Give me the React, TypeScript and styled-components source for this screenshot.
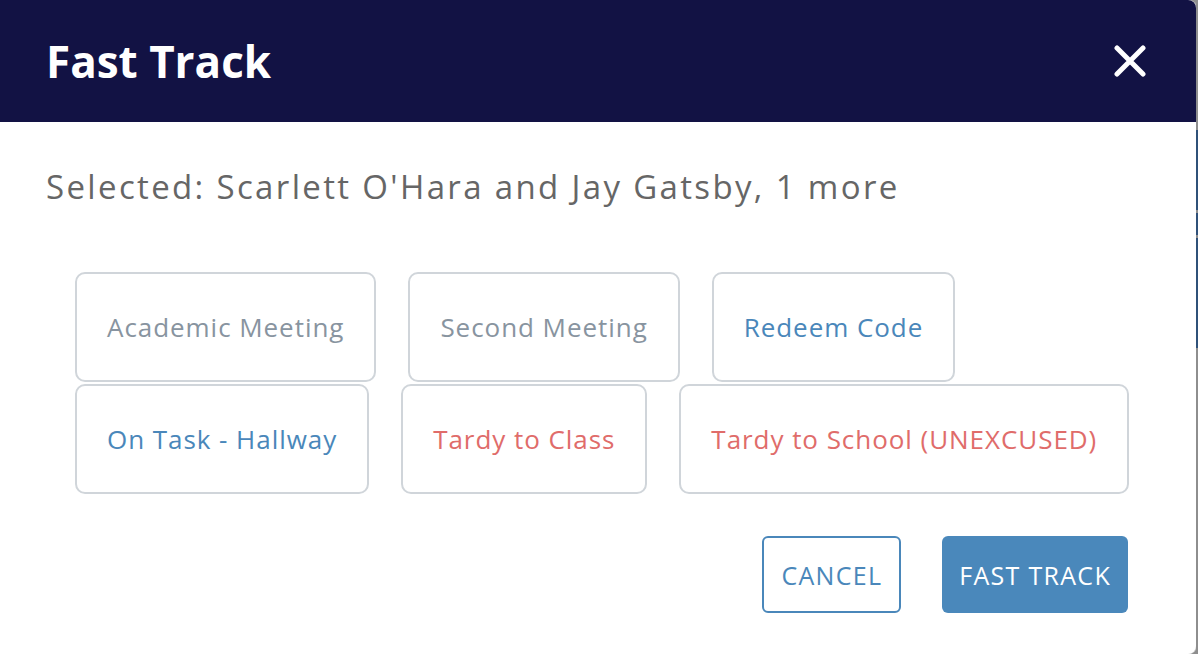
import React from "react";
import styled, { createGlobalStyle } from "styled-components";

type Tone = "muted" | "info" | "danger";

interface Item {
  label: string;
  tone: Tone;
}

const items: Item[] = [
  { label: "Academic Meeting", tone: "muted" },
  { label: "Second Meeting", tone: "muted" },
  { label: "Redeem Code", tone: "info" },
  { label: "On Task - Hallway", tone: "info" },
  { label: "Tardy to Class", tone: "danger" },
  { label: "Tardy to School (UNEXCUSED)", tone: "danger" },
];

const toneColor: Record<Tone, string> = {
  muted: "#8894a0",
  info: "#4a87ba",
  danger: "#e06c6a",
};

const App = () => {
  return (
    <Page>
      <GlobalStyle />
      <Modal>
        <Header>
          <Title>Fast Track</Title>
          <CloseButton aria-label="Close">
            <svg width="32" height="32" viewBox="0 0 32 32">
              <path
                d="M3 3 L29 29 M29 3 L3 29"
                stroke="#fff"
                strokeWidth="5"
                strokeLinecap="round"
              />
            </svg>
          </CloseButton>
        </Header>
        <Body>
          <Selected>Selected: Scarlett O'Hara and Jay Gatsby, 1 more</Selected>
          <Chips>
            {items.map((item) => (
              <Chip key={item.label} $tone={item.tone}>
                {item.label}
              </Chip>
            ))}
          </Chips>
          <Footer>
            <CancelButton>Cancel</CancelButton>
            <SubmitButton>Fast Track</SubmitButton>
          </Footer>
        </Body>
      </Modal>
      <Backdrop>
        <Segment $color="#8e8e8e" $h={130} />
        <Segment $color="#2f5179" $h={80} />
        <Segment $color="#8e8e8e" $h={3} />
        <Segment $color="#2f5179" $h={22} />
        <Segment $color="#8e8e8e" $h={3} />
        <Segment $color="#2f5179" $h={110} />
        <Segment $color="#8e8e8e" $h={306} />
      </Backdrop>
    </Page>
  );
};

export default App;

const GlobalStyle = createGlobalStyle`
  html, body {
    margin: 0;
    padding: 0;
    background: #8e8e8e;
  }
  body {
    font-family: "Open Sans", "Liberation Sans", sans-serif;
  }
`;

const Page = styled.div`
  display: flex;
  width: 1198px;
  height: 654px;
  overflow: hidden;
`;

const Modal = styled.div`
  flex: 1;
  display: flex;
  flex-direction: column;
  background: #fff;
  border-radius: 0 8px 8px 0;
  overflow: hidden;
  box-shadow: 1px 0 0 #c4c4c4;
`;

const Backdrop = styled.div`
  width: 2px;
  flex-shrink: 0;
  display: flex;
  flex-direction: column;
`;

const Segment = styled.div<{ $color: string; $h: number }>`
  height: ${(p) => p.$h}px;
  flex-shrink: 0;
  background: ${(p) => p.$color};
`;

const Header = styled.div`
  height: 122px;
  flex-shrink: 0;
  background: #121244;
  display: flex;
  align-items: center;
  justify-content: space-between;
  padding: 0 50px 0 46px;
`;

const Title = styled.h1`
  margin: 0;
  color: #fff;
  font-size: 44px;
  font-weight: 700;
`;

const CloseButton = styled.button`
  background: none;
  border: none;
  padding: 0;
  display: flex;
  cursor: pointer;
`;

const Body = styled.div`
  flex: 1;
  display: flex;
  flex-direction: column;
  padding: 0 20px 0 46px;
`;

const Selected = styled.p`
  margin: 42px 0 0;
  font-size: 33px;
  letter-spacing: 2.35px;
  color: #666;
  line-height: 46px;
`;

const Chips = styled.div`
  display: flex;
  flex-wrap: wrap;
  gap: 2px 32px;
  margin: 62px 0 0 29px;
`;

const Chip = styled.button<{ $tone: Tone }>`
  height: 110px;
  padding: 0 30px;
  background: #fff;
  border: 2px solid #d0d5da;
  border-radius: 10px;
  font-family: "Open Sans", "Liberation Sans", sans-serif;
  font-size: 26px;
  letter-spacing: 0.95px;
  color: ${(p) => toneColor[p.$tone]};
  cursor: pointer;
`;

const Footer = styled.div`
  display: flex;
  justify-content: flex-end;
  gap: 41px;
  margin-top: 42px;
  padding-right: 48px;
`;

const CancelButton = styled.button`
  height: 77px;
  padding: 0 17px;
  background: #fff;
  border: 2px solid #4a87ba;
  border-radius: 6px;
  color: #4a87ba;
  font-family: "Open Sans", "Liberation Sans", sans-serif;
  font-size: 25px;
  font-weight: 500;
  letter-spacing: 1.3px;
  text-transform: uppercase;
  cursor: pointer;
`;

const SubmitButton = styled.button`
  height: 77px;
  padding: 0 17px;
  background: #4a88bb;
  border: none;
  border-radius: 6px;
  color: #fff;
  font-family: "Open Sans", "Liberation Sans", sans-serif;
  font-size: 25px;
  font-weight: 500;
  letter-spacing: 1.3px;
  text-transform: uppercase;
  cursor: pointer;
`;
